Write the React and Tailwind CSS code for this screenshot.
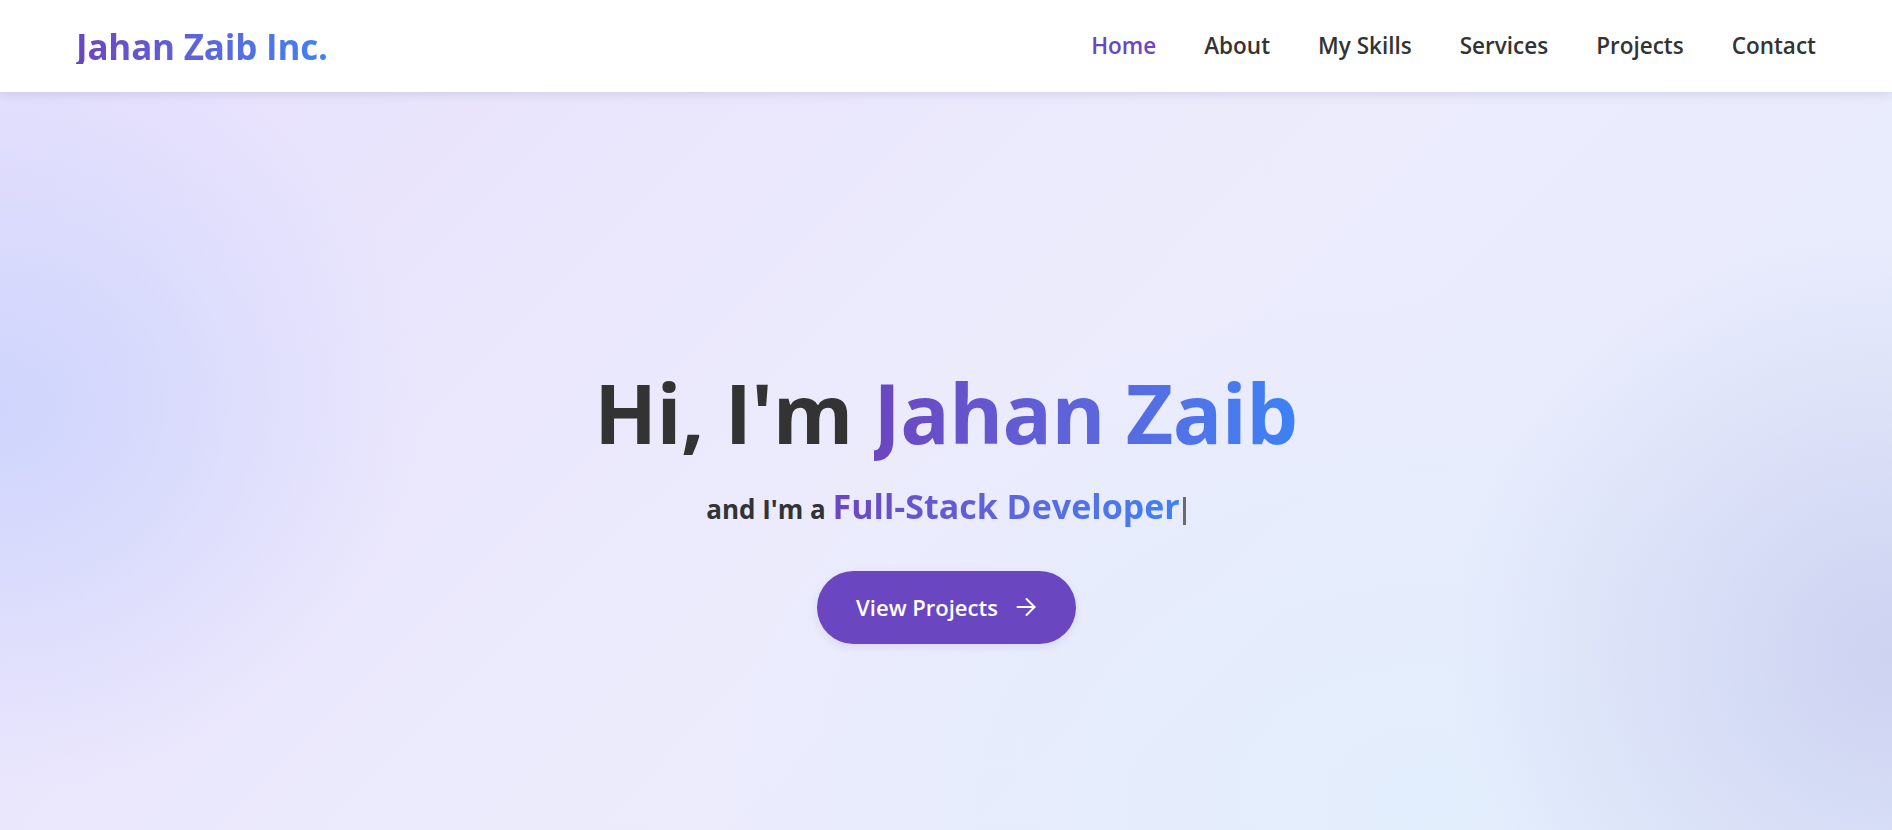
import React from "react";

const font = { fontFamily: '"Open Sans", "Noto Sans", "Liberation Sans", sans-serif' };

export default function App() {
  const links = ["Home", "About", "My Skills", "Services", "Projects", "Contact"];
  return (
    <div style={font} className="w-full overflow-hidden">
      <nav className="relative z-10 h-[92px] bg-white flex items-center justify-between px-[76px] shadow-[0_2px_10px_rgba(40,30,100,0.12)]">
        <div className="text-[35px] font-bold leading-none tracking-[-0.2px] bg-linear-to-r from-[#6b46c1] to-[#3b82f6] bg-clip-text text-transparent">
          Jahan Zaib Inc.
        </div>
        <ul className="flex items-center gap-[48px]">
          {links.map((l, i) => (
            <li
              key={l}
              className={
                "text-[22.5px] font-semibold leading-none " +
                (i === 0 ? "text-[#6b46c1]" : "text-[#333333]")
              }
            >
              {l}
            </li>
          ))}
        </ul>
      </nav>
      <section className="h-[830px] flex flex-col items-center justify-center bg-[radial-gradient(420px_380px_at_0%_38%,rgba(205,212,252,0.95),rgba(205,212,252,0)),radial-gradient(440px_420px_at_100%_68%,rgba(203,209,240,0.95),rgba(203,209,240,0)),radial-gradient(700px_500px_at_75%_85%,rgba(226,238,253,0.9),rgba(226,238,253,0)),linear-gradient(135deg,#e7e0fd_0%,#ecebfc_45%,#e5ecfc_100%)]">
        <h1 className="text-[82px] font-bold leading-none text-[#333333] tracking-[-0.5px]">
          Hi, I'm{" "}
          <span className="bg-linear-to-r from-[#6b46c1] to-[#3b82f6] bg-clip-text text-transparent">
            Jahan Zaib
          </span>
        </h1>
        <p className="mt-[33px] text-[26px] leading-[40px] font-bold text-[#333333]">
          and I'm a{" "}
          <span className="text-[34px] font-bold bg-linear-to-r from-[#6b46c1] to-[#3b82f6] bg-clip-text text-transparent">
            Full-Stack Developer
          </span>
          <span className="inline-block align-middle w-[3px] h-[28px] bg-[#6b6b6b] ml-[3px] -translate-y-[1px]"></span>
        </p>
        <button className="mt-[42px] w-[259px] h-[73px] rounded-full bg-[#6b46c1] text-white flex items-center justify-center gap-[18px] shadow-[0_3px_8px_rgba(107,70,193,0.12)]">
          <span className="text-[22px] font-semibold leading-none">View Projects</span>
          <svg width="20" height="20" viewBox="0 0 20 20" fill="none" stroke="currentColor" strokeWidth="2" strokeLinecap="round" strokeLinejoin="round">
            <path d="M1.5 10h17" />
            <path d="M10.5 2l8 8-8 8" />
          </svg>
        </button>
      </section>
    </div>
  );
}
